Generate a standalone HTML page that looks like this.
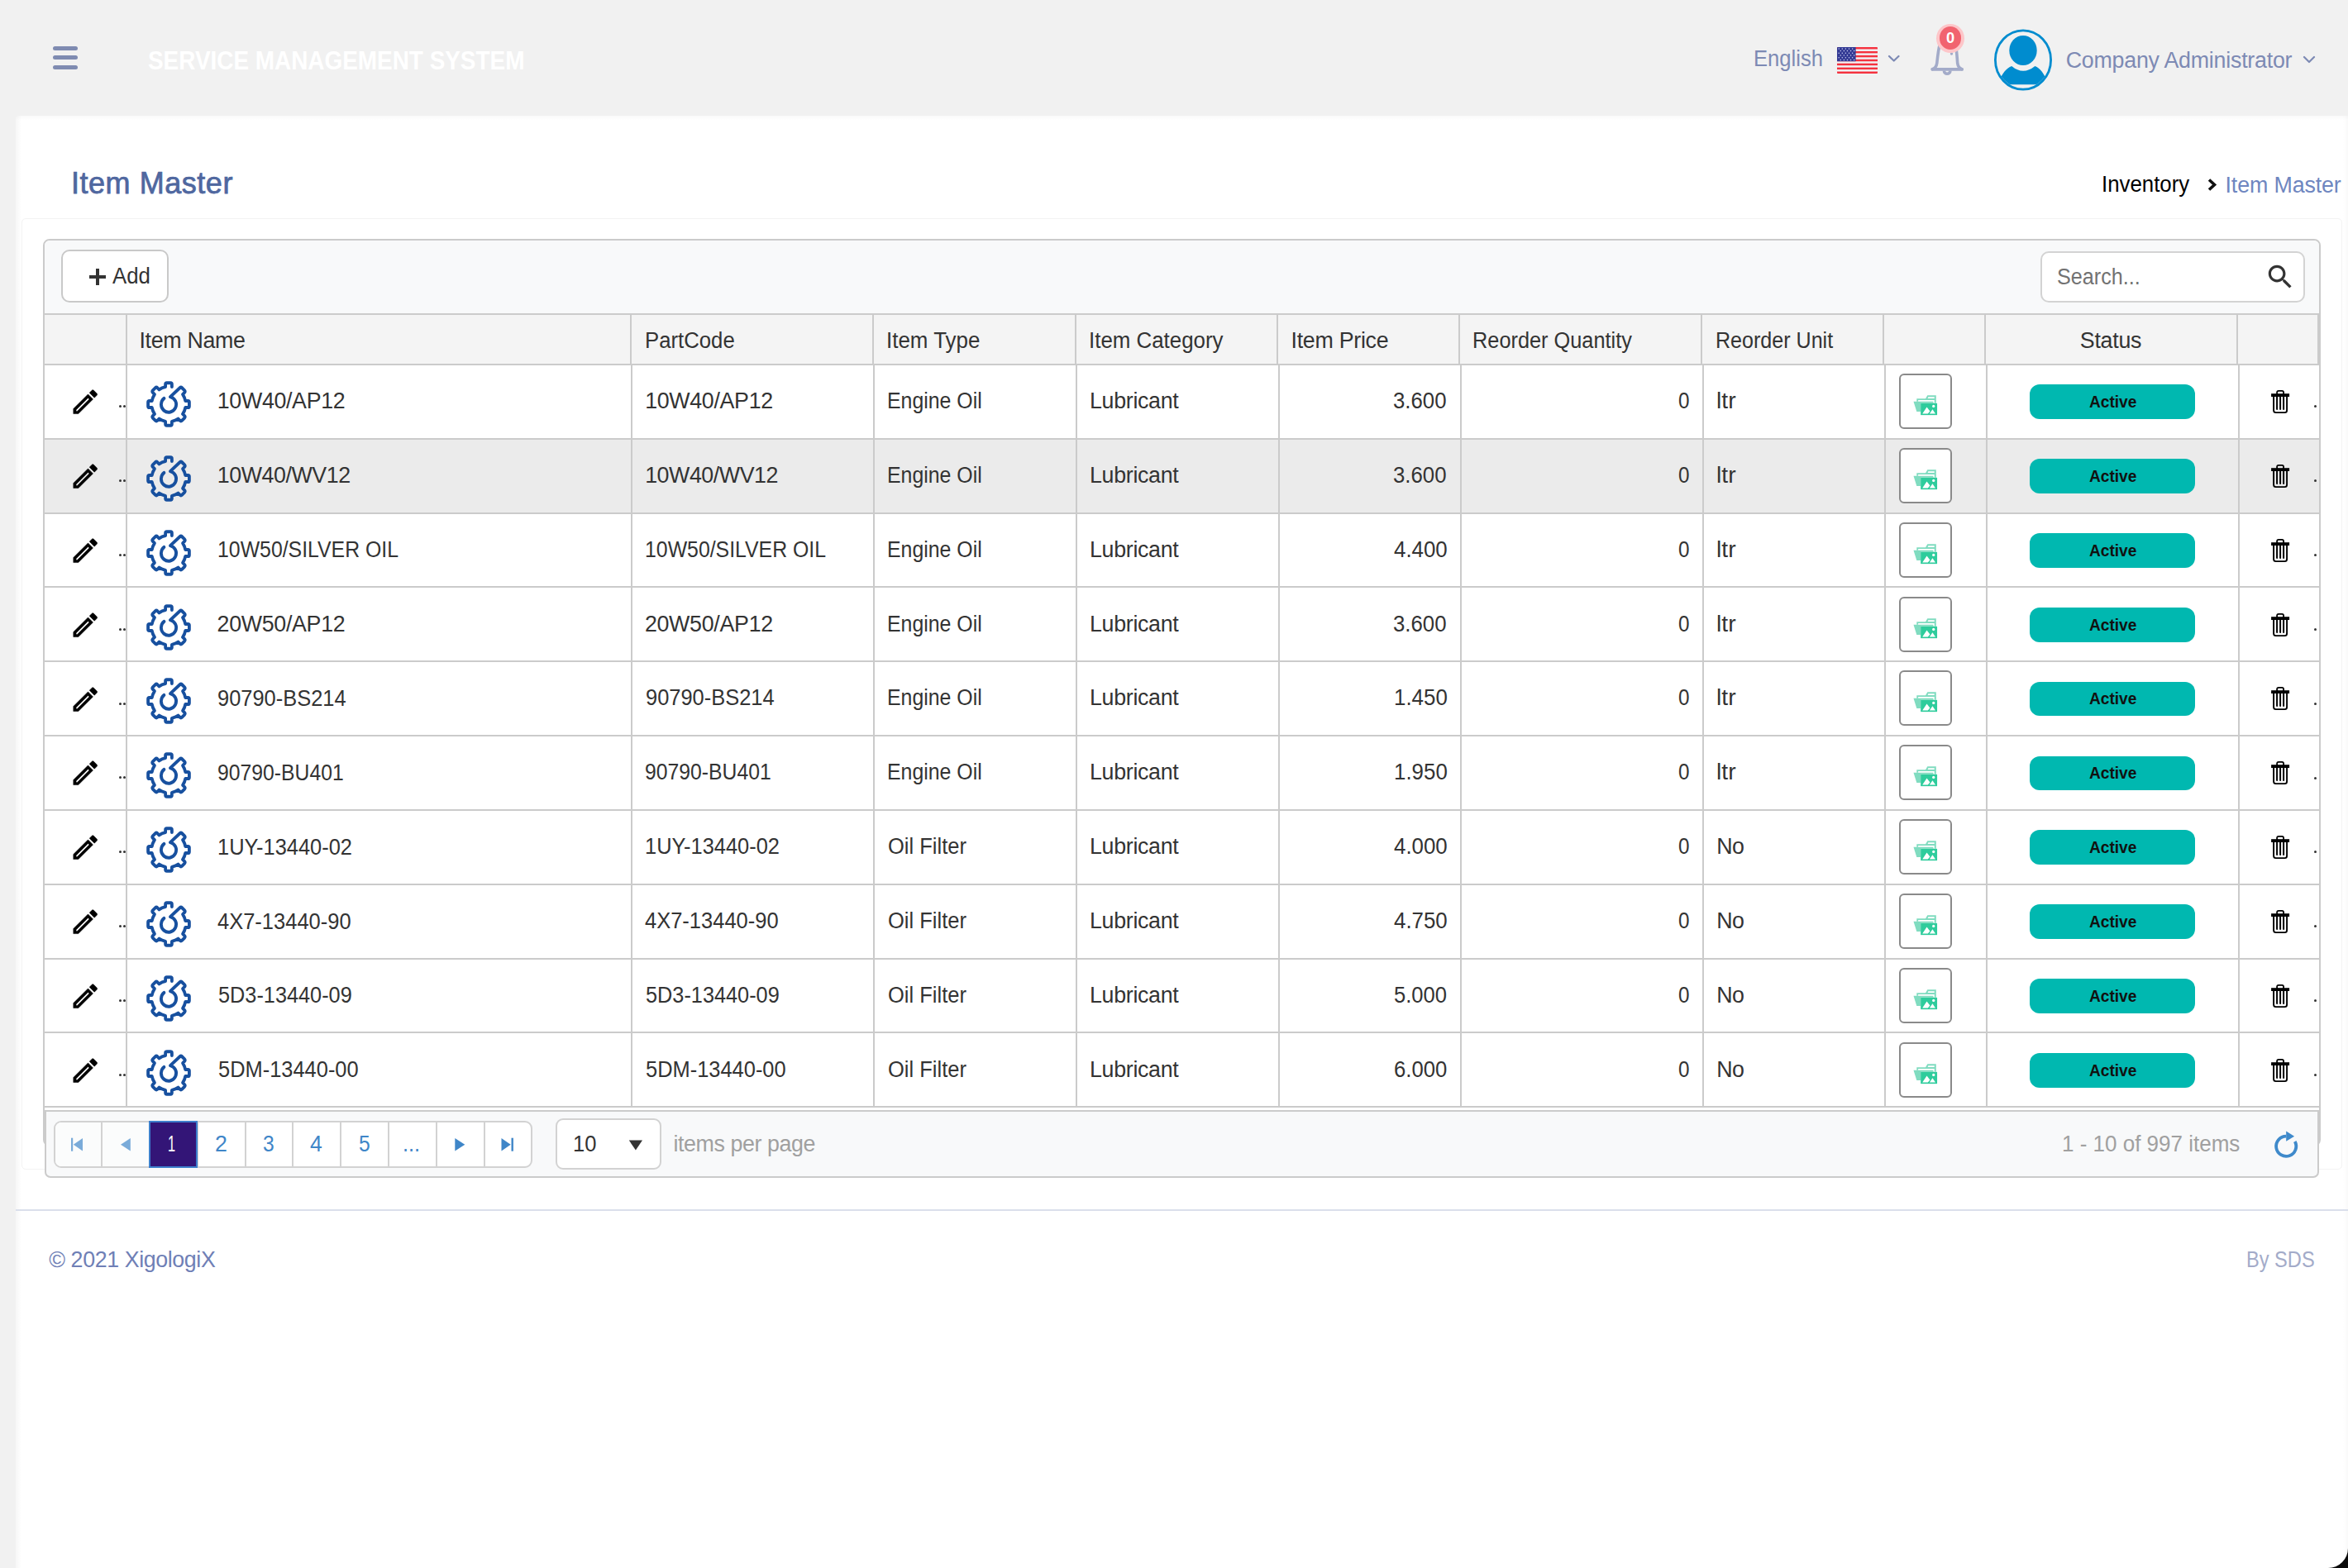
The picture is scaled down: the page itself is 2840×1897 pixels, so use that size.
<!DOCTYPE html>
<html><head><meta charset="utf-8"><title>Item Master</title>
<style>
html,body{margin:0;padding:0;}
body{width:2840px;height:1897px;position:relative;overflow:hidden;background:#f1f1f1;font-family:"Liberation Sans",sans-serif;}
.t{position:absolute;white-space:pre;line-height:1;}
</style></head><body>
<div style="position:absolute;left:0;top:0;width:2840px;height:1897px;background:#f1f1f1"></div>
<div style="position:absolute;left:64.00px;top:56.00px;width:30.20px;height:5.20px;background:#7f8bb1;border-radius:3px"></div>
<div style="position:absolute;left:64.00px;top:67.30px;width:30.20px;height:5.20px;background:#7f8bb1;border-radius:3px"></div>
<div style="position:absolute;left:64.00px;top:78.70px;width:30.20px;height:5.20px;background:#7f8bb1;border-radius:3px"></div>
<svg style="position:absolute;left:2222px;top:57px" width="49" height="32" viewBox="0 0 49 32"><defs><clipPath id="fc"><rect x="0" y="0" width="49" height="32" rx="1"/></clipPath></defs><g clip-path="url(#fc)"><rect width="49" height="32" fill="#f0f3f5"/><rect x="0" y="0.000" width="49" height="2.462" fill="#f5323f"/><rect x="0" y="4.923" width="49" height="2.462" fill="#f5323f"/><rect x="0" y="9.846" width="49" height="2.462" fill="#f5323f"/><rect x="0" y="14.769" width="49" height="2.462" fill="#f5323f"/><rect x="0" y="19.692" width="49" height="2.462" fill="#f5323f"/><rect x="0" y="24.615" width="49" height="2.462" fill="#f5323f"/><rect x="0" y="29.538" width="49" height="2.462" fill="#f5323f"/><rect x="0" y="0" width="22.6" height="17.2" fill="#333a94"/><circle cx="2.20" cy="1.90" r="0.75" fill="#c9cdf0"/><circle cx="6.30" cy="1.90" r="0.75" fill="#c9cdf0"/><circle cx="10.40" cy="1.90" r="0.75" fill="#c9cdf0"/><circle cx="14.50" cy="1.90" r="0.75" fill="#c9cdf0"/><circle cx="18.60" cy="1.90" r="0.75" fill="#c9cdf0"/><circle cx="4.25" cy="4.60" r="0.75" fill="#c9cdf0"/><circle cx="8.35" cy="4.60" r="0.75" fill="#c9cdf0"/><circle cx="12.45" cy="4.60" r="0.75" fill="#c9cdf0"/><circle cx="16.55" cy="4.60" r="0.75" fill="#c9cdf0"/><circle cx="20.65" cy="4.60" r="0.75" fill="#c9cdf0"/><circle cx="2.20" cy="7.30" r="0.75" fill="#c9cdf0"/><circle cx="6.30" cy="7.30" r="0.75" fill="#c9cdf0"/><circle cx="10.40" cy="7.30" r="0.75" fill="#c9cdf0"/><circle cx="14.50" cy="7.30" r="0.75" fill="#c9cdf0"/><circle cx="18.60" cy="7.30" r="0.75" fill="#c9cdf0"/><circle cx="4.25" cy="10.00" r="0.75" fill="#c9cdf0"/><circle cx="8.35" cy="10.00" r="0.75" fill="#c9cdf0"/><circle cx="12.45" cy="10.00" r="0.75" fill="#c9cdf0"/><circle cx="16.55" cy="10.00" r="0.75" fill="#c9cdf0"/><circle cx="20.65" cy="10.00" r="0.75" fill="#c9cdf0"/><circle cx="2.20" cy="12.70" r="0.75" fill="#c9cdf0"/><circle cx="6.30" cy="12.70" r="0.75" fill="#c9cdf0"/><circle cx="10.40" cy="12.70" r="0.75" fill="#c9cdf0"/><circle cx="14.50" cy="12.70" r="0.75" fill="#c9cdf0"/><circle cx="18.60" cy="12.70" r="0.75" fill="#c9cdf0"/><circle cx="4.25" cy="15.40" r="0.75" fill="#c9cdf0"/><circle cx="8.35" cy="15.40" r="0.75" fill="#c9cdf0"/><circle cx="12.45" cy="15.40" r="0.75" fill="#c9cdf0"/><circle cx="16.55" cy="15.40" r="0.75" fill="#c9cdf0"/><circle cx="20.65" cy="15.40" r="0.75" fill="#c9cdf0"/></g></svg>
<svg style="position:absolute;left:2282.50px;top:65.50px" width="15.50" height="10.50"><polyline points="2,2 7.75,7.50 13.50,2" fill="none" stroke="#7d8ab4" stroke-width="2.2" stroke-linecap="round" stroke-linejoin="round"/></svg>
<svg style="position:absolute;left:2784.50px;top:67.00px" width="16.00" height="11.00"><polyline points="2,2 8.00,8.00 14.00,2" fill="none" stroke="#7d8ab4" stroke-width="2.2" stroke-linecap="round" stroke-linejoin="round"/></svg>
<svg style="position:absolute;left:2325px;top:20px" width="60" height="80" viewBox="2325 20 60 80"><path d="M2346.2 54 C2344.3 61 2343.4 71 2342.8 76.2 C2342.3 80.2 2340.6 82.6 2337.2 83.7" fill="none" stroke="#a3abc9" stroke-width="3.6" stroke-linecap="round"/><path d="M2365.8 57 C2367 64 2367.3 72 2367.7 76.6 C2368.2 80.4 2369.8 82.7 2373 83.7" fill="none" stroke="#a3abc9" stroke-width="3.6" stroke-linecap="round"/><line x1="2337.4" y1="83.9" x2="2373.1" y2="83.9" stroke="#a3abc9" stroke-width="3.7" stroke-linecap="round"/><path d="M2351.4 85.5 A3.75 3.75 0 0 0 2358.9 85.5" fill="none" stroke="#a3abc9" stroke-width="3.6"/><circle cx="2360.5" cy="65" r="1.7" fill="#a3abc9"/></svg>
<div style="position:absolute;left:2341.9px;top:28.7px;width:34.2px;height:35px;border-radius:50%;background:#fdc6c9"></div>
<div style="position:absolute;left:2345.8px;top:32.3px;width:26.4px;height:27.6px;border-radius:50%;background:#f1636f"></div>
<svg style="position:absolute;left:2405px;top:30px" width="85" height="85" viewBox="2405 30 85 85"><defs><clipPath id="avc"><ellipse cx="2447" cy="72.5" rx="32.2" ry="34.3"/></clipPath></defs><ellipse cx="2447" cy="72.5" rx="33.6" ry="35.7" fill="none" stroke="#008ccf" stroke-width="2.8"/><ellipse cx="2447" cy="61" rx="16.7" ry="18" fill="#008ccf"/><path clip-path="url(#avc)" d="M2418 98 C2422 88 2427 82.5 2433.2 79.9 Q2447 91.5 2461.4 79.9 C2467.5 82.5 2472 88 2476 98 L2478 102.2 L2416 102.2 Z" fill="#008ccf"/></svg>
<div style="position:absolute;left:19px;top:140px;width:2821px;height:1757px;background:#fff"></div>
<div style="position:absolute;left:2834px;top:140px;width:6px;height:1757px;background:linear-gradient(90deg,rgba(0,0,0,0),rgba(0,0,0,0.025))"></div>
<div style="position:absolute;left:19px;top:140px;width:7px;height:1757px;background:linear-gradient(90deg,rgba(0,0,0,0.035),rgba(0,0,0,0))"></div>
<div style="position:absolute;left:19px;top:140px;width:2821px;height:5px;background:linear-gradient(180deg,rgba(0,0,0,0.025),rgba(0,0,0,0))"></div>
<svg style="position:absolute;left:2666px;top:212px" width="20" height="24"><polyline points="6,5.5 12.5,11.5 6,17.5" fill="none" stroke="#111" stroke-width="3.6" stroke-linecap="butt" stroke-linejoin="miter"/></svg>
<div style="position:absolute;left:25.5px;top:263.5px;width:2807px;height:1151.5px;border:1px solid #f3f3f3;border-radius:5px;box-sizing:border-box"></div>
<div style="position:absolute;left:51.9px;top:289.2px;width:2755.30px;height:1097.60px;border:2px solid #cbcbcb;border-radius:8px;box-sizing:border-box;background:#fff;overflow:hidden"><div style="position:absolute;left:0;top:0;right:0;height:87.70px;background:#f8f9fa"></div></div>
<div style="position:absolute;left:74.4px;top:302px;width:129.6px;height:64.4px;border:2px solid #c9c9c9;border-radius:10px;box-sizing:border-box;background:#fff"></div>
<div style="position:absolute;left:108.00px;top:333.30px;width:20.30px;height:3.70px;background:#333"></div>
<div style="position:absolute;left:116.30px;top:325.00px;width:3.70px;height:20.20px;background:#333"></div>
<div style="position:absolute;left:2467.7px;top:303.8px;width:320.6px;height:62.5px;border:2px solid #d3d3d3;border-radius:10px;box-sizing:border-box;background:#fff"></div>
<svg style="position:absolute;left:2738.8px;top:316.2px" width="38.2" height="38.2" viewBox="0 0 24 24"><path fill="#333" d="M15.5 14h-.79l-.28-.27C15.41 12.59 16 11.11 16 9.5 16 5.91 13.09 3 9.5 3S3 5.91 3 9.5 5.91 16 9.5 16c1.61 0 3.09-.59 4.23-1.57l.27.28v.79l5 4.99L20.49 19l-4.99-5zm-6 0C7.01 14 5 11.99 5 9.5S7.01 5 9.5 5 14 7.01 14 9.5 11.99 14 9.5 14z"/></svg>
<div style="position:absolute;left:53.90px;top:379.90px;width:2751.30px;height:61.00px;background:#f4f4f4"></div>
<div style="position:absolute;left:53.90px;top:530.74px;width:2751.30px;height:89.84px;background:#ebebeb"></div>
<div style="position:absolute;left:52.90px;top:378.90px;width:2753.30px;height:2.00px;background:#cbcbcb"></div>
<div style="position:absolute;left:52.90px;top:439.90px;width:2753.30px;height:2.00px;background:#cbcbcb"></div>
<div style="position:absolute;left:52.90px;top:529.74px;width:2753.30px;height:2.00px;background:#cbcbcb"></div>
<div style="position:absolute;left:52.90px;top:619.58px;width:2753.30px;height:2.00px;background:#cbcbcb"></div>
<div style="position:absolute;left:52.90px;top:709.42px;width:2753.30px;height:2.00px;background:#cbcbcb"></div>
<div style="position:absolute;left:52.90px;top:799.26px;width:2753.30px;height:2.00px;background:#cbcbcb"></div>
<div style="position:absolute;left:52.90px;top:889.10px;width:2753.30px;height:2.00px;background:#cbcbcb"></div>
<div style="position:absolute;left:52.90px;top:978.94px;width:2753.30px;height:2.00px;background:#cbcbcb"></div>
<div style="position:absolute;left:52.90px;top:1068.78px;width:2753.30px;height:2.00px;background:#cbcbcb"></div>
<div style="position:absolute;left:52.90px;top:1158.62px;width:2753.30px;height:2.00px;background:#cbcbcb"></div>
<div style="position:absolute;left:52.90px;top:1248.46px;width:2753.30px;height:2.00px;background:#cbcbcb"></div>
<div style="position:absolute;left:52.90px;top:1338.30px;width:2753.30px;height:2.00px;background:#cbcbcb"></div>
<div style="position:absolute;left:151.82px;top:379.90px;width:2.00px;height:61.00px;background:#cbcbcb"></div>
<div style="position:absolute;left:151.90px;top:440.90px;width:2.00px;height:898.40px;background:#cbcbcb"></div>
<div style="position:absolute;left:762.43px;top:379.90px;width:2.00px;height:61.00px;background:#cbcbcb"></div>
<div style="position:absolute;left:763.00px;top:440.90px;width:2.00px;height:898.40px;background:#cbcbcb"></div>
<div style="position:absolute;left:1055.40px;top:379.90px;width:2.00px;height:61.00px;background:#cbcbcb"></div>
<div style="position:absolute;left:1056.20px;top:440.90px;width:2.00px;height:898.40px;background:#cbcbcb"></div>
<div style="position:absolute;left:1300.40px;top:379.90px;width:2.00px;height:61.00px;background:#cbcbcb"></div>
<div style="position:absolute;left:1301.40px;top:440.90px;width:2.00px;height:898.40px;background:#cbcbcb"></div>
<div style="position:absolute;left:1544.41px;top:379.90px;width:2.00px;height:61.00px;background:#cbcbcb"></div>
<div style="position:absolute;left:1545.60px;top:440.90px;width:2.00px;height:898.40px;background:#cbcbcb"></div>
<div style="position:absolute;left:1764.33px;top:379.90px;width:2.00px;height:61.00px;background:#cbcbcb"></div>
<div style="position:absolute;left:1765.70px;top:440.90px;width:2.00px;height:898.40px;background:#cbcbcb"></div>
<div style="position:absolute;left:2057.19px;top:379.90px;width:2.00px;height:61.00px;background:#cbcbcb"></div>
<div style="position:absolute;left:2058.80px;top:440.90px;width:2.00px;height:898.40px;background:#cbcbcb"></div>
<div style="position:absolute;left:2277.12px;top:379.90px;width:2.00px;height:61.00px;background:#cbcbcb"></div>
<div style="position:absolute;left:2278.90px;top:440.90px;width:2.00px;height:898.40px;background:#cbcbcb"></div>
<div style="position:absolute;left:2400.02px;top:379.90px;width:2.00px;height:61.00px;background:#cbcbcb"></div>
<div style="position:absolute;left:2401.90px;top:440.90px;width:2.00px;height:898.40px;background:#cbcbcb"></div>
<div style="position:absolute;left:2704.98px;top:379.90px;width:2.00px;height:61.00px;background:#cbcbcb"></div>
<div style="position:absolute;left:2707.10px;top:440.90px;width:2.00px;height:898.40px;background:#cbcbcb"></div>
<div style="position:absolute;left:2802.60px;top:379.90px;width:2.00px;height:61.00px;background:#cbcbcb"></div>
<svg style="position:absolute;left:84.4px;top:467.22px" width="38.4" height="38.4" viewBox="0 0 24 24"><path fill="#000" stroke="#000" stroke-width="0.32" stroke-linejoin="miter" d="M3 17.25V21h3.75L17.81 9.94l-3.75-3.75L3 17.25zM5.92 19H5v-.92l9.06-9.06.92.92L5.92 19zM20.71 5.63l-2.34-2.34c-.39-.39-1.02-.39-1.41 0l-1.83 1.83 3.75 3.75 1.83-1.83c.39-.39.39-1.02 0-1.41z"/></svg>
<div style="position:absolute;left:143.50px;top:490.22px;width:3px;height:3px;border-radius:50%;background:#333"></div>
<div style="position:absolute;left:149.00px;top:490.22px;width:3px;height:3px;border-radius:50%;background:#333"></div>
<svg style="position:absolute;left:173.80px;top:459.07px" width="60" height="60" viewBox="-30 -30 60 60"><path d="M3.90 -20.20 L3.90 -23.30 Q3.90 -24.90 2.30 -24.90 L-2.30 -24.90 Q-3.90 -24.90 -3.90 -23.30 L-3.90 -20.20 A20.50 20.50 0 0 0 -11.53 -17.04 L-13.72 -19.23 Q-14.85 -20.36 -15.98 -19.23 L-19.23 -15.98 Q-20.36 -14.85 -19.23 -13.72 L-17.04 -11.53 A20.50 20.50 0 0 0 -20.20 -3.90 L-23.30 -3.90 Q-24.90 -3.90 -24.90 -2.30 L-24.90 2.30 Q-24.90 3.90 -23.30 3.90 L-20.20 3.90 A20.50 20.50 0 0 0 -17.04 11.53 L-19.23 13.72 Q-20.36 14.85 -19.23 15.98 L-15.98 19.23 Q-14.85 20.36 -13.72 19.23 L-11.53 17.04 A20.50 20.50 0 0 0 -3.90 20.20 L-3.90 23.30 Q-3.90 24.90 -2.30 24.90 L2.30 24.90 Q3.90 24.90 3.90 23.30 L3.90 20.20 A20.50 20.50 0 0 0 11.53 17.04 L13.72 19.23 Q14.85 20.36 15.98 19.23 L19.23 15.98 Q20.36 14.85 19.23 13.72 L17.04 11.53 A20.50 20.50 0 0 0 20.20 3.90 L23.30 3.90 Q24.90 3.90 24.90 2.30 L24.90 -2.30 Q24.90 -3.90 23.30 -3.90 L20.20 -3.90 A20.50 20.50 0 0 0 17.04 -11.53 L19.23 -13.72 Q20.36 -14.85 19.23 -15.98 L16.12 -19.09 Q14.85 -20.36 13.52 -19.15 L1.97 -8.58 A9.1 9.1 0 1 1 -5.55 -6.91" transform="scale(1,1.035)" fill="none" stroke="#17509f" stroke-width="3.8" stroke-linejoin="round" stroke-linecap="round"/></svg>
<div style="position:absolute;left:2297.4px;top:452.12px;width:63.6px;height:66.9px;border:2px solid #8a8a8a;border-radius:6px;box-sizing:border-box;background:#fff"></div>
<svg style="position:absolute;left:2290px;top:445.02px" width="80" height="80" viewBox="0 0 1568 1568"><path fill-rule="evenodd" d="M555 800 L555 730 L765 730 L810 650 L1015 650 L1015 840 L975 840 L975 765 L590 765 L590 800 Z M830 690 L975 690 L975 725 L815 725 Z" fill="#80dcc0"/><path d="M480 800 L940 800 L960 840 L650 840 L650 1040 L555 1040 Z" fill="#80dcc0"/><path d="M650 840 L1040 840 L1040 1120 L650 1120 Z" fill="#2ecc9c"/><path d="M690 1090 L795 930 L870 1030 L820 1090 Z M860 1090 L930 985 L1000 1090 Z" fill="#fff"/><circle cx="955" cy="910" r="32" fill="#fff"/></svg>
<div style="position:absolute;left:2455px;top:465.42px;width:200px;height:41.6px;border-radius:12px;background:#00b8b0"></div>
<svg style="position:absolute;left:2740px;top:465.02px" width="36" height="40" viewBox="2740 465 36 40"><rect x="2754.1" y="472.9" width="8" height="5" rx="2" fill="none" stroke="#000" stroke-width="1.8"/><rect x="2747.1" y="476.2" width="22" height="3.8" fill="#000"/><path d="M2750.1 479.5 L2750.1 496.5 Q2750.1 499.1 2752.7 499.1 L2763.5 499.1 Q2766.1 499.1 2766.1 496.5 L2766.1 479.5" fill="none" stroke="#000" stroke-width="1.9"/><line x1="2754.1" y1="480" x2="2754.1" y2="495" stroke="#000" stroke-width="2" stroke-linecap="round"/><line x1="2758.1" y1="480" x2="2758.1" y2="495" stroke="#000" stroke-width="2" stroke-linecap="round"/><line x1="2762.1" y1="480" x2="2762.1" y2="495" stroke="#000" stroke-width="2" stroke-linecap="round"/></svg>
<div style="position:absolute;left:2799.20px;top:490.42px;width:3px;height:3px;border-radius:50%;background:#333"></div>
<svg style="position:absolute;left:84.4px;top:557.06px" width="38.4" height="38.4" viewBox="0 0 24 24"><path fill="#000" stroke="#000" stroke-width="0.32" stroke-linejoin="miter" d="M3 17.25V21h3.75L17.81 9.94l-3.75-3.75L3 17.25zM5.92 19H5v-.92l9.06-9.06.92.92L5.92 19zM20.71 5.63l-2.34-2.34c-.39-.39-1.02-.39-1.41 0l-1.83 1.83 3.75 3.75 1.83-1.83c.39-.39.39-1.02 0-1.41z"/></svg>
<div style="position:absolute;left:143.50px;top:580.06px;width:3px;height:3px;border-radius:50%;background:#333"></div>
<div style="position:absolute;left:149.00px;top:580.06px;width:3px;height:3px;border-radius:50%;background:#333"></div>
<svg style="position:absolute;left:173.80px;top:548.91px" width="60" height="60" viewBox="-30 -30 60 60"><path d="M3.90 -20.20 L3.90 -23.30 Q3.90 -24.90 2.30 -24.90 L-2.30 -24.90 Q-3.90 -24.90 -3.90 -23.30 L-3.90 -20.20 A20.50 20.50 0 0 0 -11.53 -17.04 L-13.72 -19.23 Q-14.85 -20.36 -15.98 -19.23 L-19.23 -15.98 Q-20.36 -14.85 -19.23 -13.72 L-17.04 -11.53 A20.50 20.50 0 0 0 -20.20 -3.90 L-23.30 -3.90 Q-24.90 -3.90 -24.90 -2.30 L-24.90 2.30 Q-24.90 3.90 -23.30 3.90 L-20.20 3.90 A20.50 20.50 0 0 0 -17.04 11.53 L-19.23 13.72 Q-20.36 14.85 -19.23 15.98 L-15.98 19.23 Q-14.85 20.36 -13.72 19.23 L-11.53 17.04 A20.50 20.50 0 0 0 -3.90 20.20 L-3.90 23.30 Q-3.90 24.90 -2.30 24.90 L2.30 24.90 Q3.90 24.90 3.90 23.30 L3.90 20.20 A20.50 20.50 0 0 0 11.53 17.04 L13.72 19.23 Q14.85 20.36 15.98 19.23 L19.23 15.98 Q20.36 14.85 19.23 13.72 L17.04 11.53 A20.50 20.50 0 0 0 20.20 3.90 L23.30 3.90 Q24.90 3.90 24.90 2.30 L24.90 -2.30 Q24.90 -3.90 23.30 -3.90 L20.20 -3.90 A20.50 20.50 0 0 0 17.04 -11.53 L19.23 -13.72 Q20.36 -14.85 19.23 -15.98 L16.12 -19.09 Q14.85 -20.36 13.52 -19.15 L1.97 -8.58 A9.1 9.1 0 1 1 -5.55 -6.91" transform="scale(1,1.035)" fill="none" stroke="#17509f" stroke-width="3.8" stroke-linejoin="round" stroke-linecap="round"/></svg>
<div style="position:absolute;left:2297.4px;top:541.96px;width:63.6px;height:66.9px;border:2px solid #8a8a8a;border-radius:6px;box-sizing:border-box;background:#fff"></div>
<svg style="position:absolute;left:2290px;top:534.86px" width="80" height="80" viewBox="0 0 1568 1568"><path fill-rule="evenodd" d="M555 800 L555 730 L765 730 L810 650 L1015 650 L1015 840 L975 840 L975 765 L590 765 L590 800 Z M830 690 L975 690 L975 725 L815 725 Z" fill="#80dcc0"/><path d="M480 800 L940 800 L960 840 L650 840 L650 1040 L555 1040 Z" fill="#80dcc0"/><path d="M650 840 L1040 840 L1040 1120 L650 1120 Z" fill="#2ecc9c"/><path d="M690 1090 L795 930 L870 1030 L820 1090 Z M860 1090 L930 985 L1000 1090 Z" fill="#fff"/><circle cx="955" cy="910" r="32" fill="#fff"/></svg>
<div style="position:absolute;left:2455px;top:555.26px;width:200px;height:41.6px;border-radius:12px;background:#00b8b0"></div>
<svg style="position:absolute;left:2740px;top:554.86px" width="36" height="40" viewBox="2740 465 36 40"><rect x="2754.1" y="472.9" width="8" height="5" rx="2" fill="none" stroke="#000" stroke-width="1.8"/><rect x="2747.1" y="476.2" width="22" height="3.8" fill="#000"/><path d="M2750.1 479.5 L2750.1 496.5 Q2750.1 499.1 2752.7 499.1 L2763.5 499.1 Q2766.1 499.1 2766.1 496.5 L2766.1 479.5" fill="none" stroke="#000" stroke-width="1.9"/><line x1="2754.1" y1="480" x2="2754.1" y2="495" stroke="#000" stroke-width="2" stroke-linecap="round"/><line x1="2758.1" y1="480" x2="2758.1" y2="495" stroke="#000" stroke-width="2" stroke-linecap="round"/><line x1="2762.1" y1="480" x2="2762.1" y2="495" stroke="#000" stroke-width="2" stroke-linecap="round"/></svg>
<div style="position:absolute;left:2799.20px;top:580.26px;width:3px;height:3px;border-radius:50%;background:#333"></div>
<svg style="position:absolute;left:84.4px;top:646.90px" width="38.4" height="38.4" viewBox="0 0 24 24"><path fill="#000" stroke="#000" stroke-width="0.32" stroke-linejoin="miter" d="M3 17.25V21h3.75L17.81 9.94l-3.75-3.75L3 17.25zM5.92 19H5v-.92l9.06-9.06.92.92L5.92 19zM20.71 5.63l-2.34-2.34c-.39-.39-1.02-.39-1.41 0l-1.83 1.83 3.75 3.75 1.83-1.83c.39-.39.39-1.02 0-1.41z"/></svg>
<div style="position:absolute;left:143.50px;top:669.90px;width:3px;height:3px;border-radius:50%;background:#333"></div>
<div style="position:absolute;left:149.00px;top:669.90px;width:3px;height:3px;border-radius:50%;background:#333"></div>
<svg style="position:absolute;left:173.80px;top:638.75px" width="60" height="60" viewBox="-30 -30 60 60"><path d="M3.90 -20.20 L3.90 -23.30 Q3.90 -24.90 2.30 -24.90 L-2.30 -24.90 Q-3.90 -24.90 -3.90 -23.30 L-3.90 -20.20 A20.50 20.50 0 0 0 -11.53 -17.04 L-13.72 -19.23 Q-14.85 -20.36 -15.98 -19.23 L-19.23 -15.98 Q-20.36 -14.85 -19.23 -13.72 L-17.04 -11.53 A20.50 20.50 0 0 0 -20.20 -3.90 L-23.30 -3.90 Q-24.90 -3.90 -24.90 -2.30 L-24.90 2.30 Q-24.90 3.90 -23.30 3.90 L-20.20 3.90 A20.50 20.50 0 0 0 -17.04 11.53 L-19.23 13.72 Q-20.36 14.85 -19.23 15.98 L-15.98 19.23 Q-14.85 20.36 -13.72 19.23 L-11.53 17.04 A20.50 20.50 0 0 0 -3.90 20.20 L-3.90 23.30 Q-3.90 24.90 -2.30 24.90 L2.30 24.90 Q3.90 24.90 3.90 23.30 L3.90 20.20 A20.50 20.50 0 0 0 11.53 17.04 L13.72 19.23 Q14.85 20.36 15.98 19.23 L19.23 15.98 Q20.36 14.85 19.23 13.72 L17.04 11.53 A20.50 20.50 0 0 0 20.20 3.90 L23.30 3.90 Q24.90 3.90 24.90 2.30 L24.90 -2.30 Q24.90 -3.90 23.30 -3.90 L20.20 -3.90 A20.50 20.50 0 0 0 17.04 -11.53 L19.23 -13.72 Q20.36 -14.85 19.23 -15.98 L16.12 -19.09 Q14.85 -20.36 13.52 -19.15 L1.97 -8.58 A9.1 9.1 0 1 1 -5.55 -6.91" transform="scale(1,1.035)" fill="none" stroke="#17509f" stroke-width="3.8" stroke-linejoin="round" stroke-linecap="round"/></svg>
<div style="position:absolute;left:2297.4px;top:631.80px;width:63.6px;height:66.9px;border:2px solid #8a8a8a;border-radius:6px;box-sizing:border-box;background:#fff"></div>
<svg style="position:absolute;left:2290px;top:624.70px" width="80" height="80" viewBox="0 0 1568 1568"><path fill-rule="evenodd" d="M555 800 L555 730 L765 730 L810 650 L1015 650 L1015 840 L975 840 L975 765 L590 765 L590 800 Z M830 690 L975 690 L975 725 L815 725 Z" fill="#80dcc0"/><path d="M480 800 L940 800 L960 840 L650 840 L650 1040 L555 1040 Z" fill="#80dcc0"/><path d="M650 840 L1040 840 L1040 1120 L650 1120 Z" fill="#2ecc9c"/><path d="M690 1090 L795 930 L870 1030 L820 1090 Z M860 1090 L930 985 L1000 1090 Z" fill="#fff"/><circle cx="955" cy="910" r="32" fill="#fff"/></svg>
<div style="position:absolute;left:2455px;top:645.10px;width:200px;height:41.6px;border-radius:12px;background:#00b8b0"></div>
<svg style="position:absolute;left:2740px;top:644.70px" width="36" height="40" viewBox="2740 465 36 40"><rect x="2754.1" y="472.9" width="8" height="5" rx="2" fill="none" stroke="#000" stroke-width="1.8"/><rect x="2747.1" y="476.2" width="22" height="3.8" fill="#000"/><path d="M2750.1 479.5 L2750.1 496.5 Q2750.1 499.1 2752.7 499.1 L2763.5 499.1 Q2766.1 499.1 2766.1 496.5 L2766.1 479.5" fill="none" stroke="#000" stroke-width="1.9"/><line x1="2754.1" y1="480" x2="2754.1" y2="495" stroke="#000" stroke-width="2" stroke-linecap="round"/><line x1="2758.1" y1="480" x2="2758.1" y2="495" stroke="#000" stroke-width="2" stroke-linecap="round"/><line x1="2762.1" y1="480" x2="2762.1" y2="495" stroke="#000" stroke-width="2" stroke-linecap="round"/></svg>
<div style="position:absolute;left:2799.20px;top:670.10px;width:3px;height:3px;border-radius:50%;background:#333"></div>
<svg style="position:absolute;left:84.4px;top:736.74px" width="38.4" height="38.4" viewBox="0 0 24 24"><path fill="#000" stroke="#000" stroke-width="0.32" stroke-linejoin="miter" d="M3 17.25V21h3.75L17.81 9.94l-3.75-3.75L3 17.25zM5.92 19H5v-.92l9.06-9.06.92.92L5.92 19zM20.71 5.63l-2.34-2.34c-.39-.39-1.02-.39-1.41 0l-1.83 1.83 3.75 3.75 1.83-1.83c.39-.39.39-1.02 0-1.41z"/></svg>
<div style="position:absolute;left:143.50px;top:759.74px;width:3px;height:3px;border-radius:50%;background:#333"></div>
<div style="position:absolute;left:149.00px;top:759.74px;width:3px;height:3px;border-radius:50%;background:#333"></div>
<svg style="position:absolute;left:173.80px;top:728.59px" width="60" height="60" viewBox="-30 -30 60 60"><path d="M3.90 -20.20 L3.90 -23.30 Q3.90 -24.90 2.30 -24.90 L-2.30 -24.90 Q-3.90 -24.90 -3.90 -23.30 L-3.90 -20.20 A20.50 20.50 0 0 0 -11.53 -17.04 L-13.72 -19.23 Q-14.85 -20.36 -15.98 -19.23 L-19.23 -15.98 Q-20.36 -14.85 -19.23 -13.72 L-17.04 -11.53 A20.50 20.50 0 0 0 -20.20 -3.90 L-23.30 -3.90 Q-24.90 -3.90 -24.90 -2.30 L-24.90 2.30 Q-24.90 3.90 -23.30 3.90 L-20.20 3.90 A20.50 20.50 0 0 0 -17.04 11.53 L-19.23 13.72 Q-20.36 14.85 -19.23 15.98 L-15.98 19.23 Q-14.85 20.36 -13.72 19.23 L-11.53 17.04 A20.50 20.50 0 0 0 -3.90 20.20 L-3.90 23.30 Q-3.90 24.90 -2.30 24.90 L2.30 24.90 Q3.90 24.90 3.90 23.30 L3.90 20.20 A20.50 20.50 0 0 0 11.53 17.04 L13.72 19.23 Q14.85 20.36 15.98 19.23 L19.23 15.98 Q20.36 14.85 19.23 13.72 L17.04 11.53 A20.50 20.50 0 0 0 20.20 3.90 L23.30 3.90 Q24.90 3.90 24.90 2.30 L24.90 -2.30 Q24.90 -3.90 23.30 -3.90 L20.20 -3.90 A20.50 20.50 0 0 0 17.04 -11.53 L19.23 -13.72 Q20.36 -14.85 19.23 -15.98 L16.12 -19.09 Q14.85 -20.36 13.52 -19.15 L1.97 -8.58 A9.1 9.1 0 1 1 -5.55 -6.91" transform="scale(1,1.035)" fill="none" stroke="#17509f" stroke-width="3.8" stroke-linejoin="round" stroke-linecap="round"/></svg>
<div style="position:absolute;left:2297.4px;top:721.64px;width:63.6px;height:66.9px;border:2px solid #8a8a8a;border-radius:6px;box-sizing:border-box;background:#fff"></div>
<svg style="position:absolute;left:2290px;top:714.54px" width="80" height="80" viewBox="0 0 1568 1568"><path fill-rule="evenodd" d="M555 800 L555 730 L765 730 L810 650 L1015 650 L1015 840 L975 840 L975 765 L590 765 L590 800 Z M830 690 L975 690 L975 725 L815 725 Z" fill="#80dcc0"/><path d="M480 800 L940 800 L960 840 L650 840 L650 1040 L555 1040 Z" fill="#80dcc0"/><path d="M650 840 L1040 840 L1040 1120 L650 1120 Z" fill="#2ecc9c"/><path d="M690 1090 L795 930 L870 1030 L820 1090 Z M860 1090 L930 985 L1000 1090 Z" fill="#fff"/><circle cx="955" cy="910" r="32" fill="#fff"/></svg>
<div style="position:absolute;left:2455px;top:734.94px;width:200px;height:41.6px;border-radius:12px;background:#00b8b0"></div>
<svg style="position:absolute;left:2740px;top:734.54px" width="36" height="40" viewBox="2740 465 36 40"><rect x="2754.1" y="472.9" width="8" height="5" rx="2" fill="none" stroke="#000" stroke-width="1.8"/><rect x="2747.1" y="476.2" width="22" height="3.8" fill="#000"/><path d="M2750.1 479.5 L2750.1 496.5 Q2750.1 499.1 2752.7 499.1 L2763.5 499.1 Q2766.1 499.1 2766.1 496.5 L2766.1 479.5" fill="none" stroke="#000" stroke-width="1.9"/><line x1="2754.1" y1="480" x2="2754.1" y2="495" stroke="#000" stroke-width="2" stroke-linecap="round"/><line x1="2758.1" y1="480" x2="2758.1" y2="495" stroke="#000" stroke-width="2" stroke-linecap="round"/><line x1="2762.1" y1="480" x2="2762.1" y2="495" stroke="#000" stroke-width="2" stroke-linecap="round"/></svg>
<div style="position:absolute;left:2799.20px;top:759.94px;width:3px;height:3px;border-radius:50%;background:#333"></div>
<svg style="position:absolute;left:84.4px;top:826.58px" width="38.4" height="38.4" viewBox="0 0 24 24"><path fill="#000" stroke="#000" stroke-width="0.32" stroke-linejoin="miter" d="M3 17.25V21h3.75L17.81 9.94l-3.75-3.75L3 17.25zM5.92 19H5v-.92l9.06-9.06.92.92L5.92 19zM20.71 5.63l-2.34-2.34c-.39-.39-1.02-.39-1.41 0l-1.83 1.83 3.75 3.75 1.83-1.83c.39-.39.39-1.02 0-1.41z"/></svg>
<div style="position:absolute;left:143.50px;top:849.58px;width:3px;height:3px;border-radius:50%;background:#333"></div>
<div style="position:absolute;left:149.00px;top:849.58px;width:3px;height:3px;border-radius:50%;background:#333"></div>
<svg style="position:absolute;left:173.80px;top:818.43px" width="60" height="60" viewBox="-30 -30 60 60"><path d="M3.90 -20.20 L3.90 -23.30 Q3.90 -24.90 2.30 -24.90 L-2.30 -24.90 Q-3.90 -24.90 -3.90 -23.30 L-3.90 -20.20 A20.50 20.50 0 0 0 -11.53 -17.04 L-13.72 -19.23 Q-14.85 -20.36 -15.98 -19.23 L-19.23 -15.98 Q-20.36 -14.85 -19.23 -13.72 L-17.04 -11.53 A20.50 20.50 0 0 0 -20.20 -3.90 L-23.30 -3.90 Q-24.90 -3.90 -24.90 -2.30 L-24.90 2.30 Q-24.90 3.90 -23.30 3.90 L-20.20 3.90 A20.50 20.50 0 0 0 -17.04 11.53 L-19.23 13.72 Q-20.36 14.85 -19.23 15.98 L-15.98 19.23 Q-14.85 20.36 -13.72 19.23 L-11.53 17.04 A20.50 20.50 0 0 0 -3.90 20.20 L-3.90 23.30 Q-3.90 24.90 -2.30 24.90 L2.30 24.90 Q3.90 24.90 3.90 23.30 L3.90 20.20 A20.50 20.50 0 0 0 11.53 17.04 L13.72 19.23 Q14.85 20.36 15.98 19.23 L19.23 15.98 Q20.36 14.85 19.23 13.72 L17.04 11.53 A20.50 20.50 0 0 0 20.20 3.90 L23.30 3.90 Q24.90 3.90 24.90 2.30 L24.90 -2.30 Q24.90 -3.90 23.30 -3.90 L20.20 -3.90 A20.50 20.50 0 0 0 17.04 -11.53 L19.23 -13.72 Q20.36 -14.85 19.23 -15.98 L16.12 -19.09 Q14.85 -20.36 13.52 -19.15 L1.97 -8.58 A9.1 9.1 0 1 1 -5.55 -6.91" transform="scale(1,1.035)" fill="none" stroke="#17509f" stroke-width="3.8" stroke-linejoin="round" stroke-linecap="round"/></svg>
<div style="position:absolute;left:2297.4px;top:811.48px;width:63.6px;height:66.9px;border:2px solid #8a8a8a;border-radius:6px;box-sizing:border-box;background:#fff"></div>
<svg style="position:absolute;left:2290px;top:804.38px" width="80" height="80" viewBox="0 0 1568 1568"><path fill-rule="evenodd" d="M555 800 L555 730 L765 730 L810 650 L1015 650 L1015 840 L975 840 L975 765 L590 765 L590 800 Z M830 690 L975 690 L975 725 L815 725 Z" fill="#80dcc0"/><path d="M480 800 L940 800 L960 840 L650 840 L650 1040 L555 1040 Z" fill="#80dcc0"/><path d="M650 840 L1040 840 L1040 1120 L650 1120 Z" fill="#2ecc9c"/><path d="M690 1090 L795 930 L870 1030 L820 1090 Z M860 1090 L930 985 L1000 1090 Z" fill="#fff"/><circle cx="955" cy="910" r="32" fill="#fff"/></svg>
<div style="position:absolute;left:2455px;top:824.78px;width:200px;height:41.6px;border-radius:12px;background:#00b8b0"></div>
<svg style="position:absolute;left:2740px;top:824.38px" width="36" height="40" viewBox="2740 465 36 40"><rect x="2754.1" y="472.9" width="8" height="5" rx="2" fill="none" stroke="#000" stroke-width="1.8"/><rect x="2747.1" y="476.2" width="22" height="3.8" fill="#000"/><path d="M2750.1 479.5 L2750.1 496.5 Q2750.1 499.1 2752.7 499.1 L2763.5 499.1 Q2766.1 499.1 2766.1 496.5 L2766.1 479.5" fill="none" stroke="#000" stroke-width="1.9"/><line x1="2754.1" y1="480" x2="2754.1" y2="495" stroke="#000" stroke-width="2" stroke-linecap="round"/><line x1="2758.1" y1="480" x2="2758.1" y2="495" stroke="#000" stroke-width="2" stroke-linecap="round"/><line x1="2762.1" y1="480" x2="2762.1" y2="495" stroke="#000" stroke-width="2" stroke-linecap="round"/></svg>
<div style="position:absolute;left:2799.20px;top:849.78px;width:3px;height:3px;border-radius:50%;background:#333"></div>
<svg style="position:absolute;left:84.4px;top:916.42px" width="38.4" height="38.4" viewBox="0 0 24 24"><path fill="#000" stroke="#000" stroke-width="0.32" stroke-linejoin="miter" d="M3 17.25V21h3.75L17.81 9.94l-3.75-3.75L3 17.25zM5.92 19H5v-.92l9.06-9.06.92.92L5.92 19zM20.71 5.63l-2.34-2.34c-.39-.39-1.02-.39-1.41 0l-1.83 1.83 3.75 3.75 1.83-1.83c.39-.39.39-1.02 0-1.41z"/></svg>
<div style="position:absolute;left:143.50px;top:939.42px;width:3px;height:3px;border-radius:50%;background:#333"></div>
<div style="position:absolute;left:149.00px;top:939.42px;width:3px;height:3px;border-radius:50%;background:#333"></div>
<svg style="position:absolute;left:173.80px;top:908.27px" width="60" height="60" viewBox="-30 -30 60 60"><path d="M3.90 -20.20 L3.90 -23.30 Q3.90 -24.90 2.30 -24.90 L-2.30 -24.90 Q-3.90 -24.90 -3.90 -23.30 L-3.90 -20.20 A20.50 20.50 0 0 0 -11.53 -17.04 L-13.72 -19.23 Q-14.85 -20.36 -15.98 -19.23 L-19.23 -15.98 Q-20.36 -14.85 -19.23 -13.72 L-17.04 -11.53 A20.50 20.50 0 0 0 -20.20 -3.90 L-23.30 -3.90 Q-24.90 -3.90 -24.90 -2.30 L-24.90 2.30 Q-24.90 3.90 -23.30 3.90 L-20.20 3.90 A20.50 20.50 0 0 0 -17.04 11.53 L-19.23 13.72 Q-20.36 14.85 -19.23 15.98 L-15.98 19.23 Q-14.85 20.36 -13.72 19.23 L-11.53 17.04 A20.50 20.50 0 0 0 -3.90 20.20 L-3.90 23.30 Q-3.90 24.90 -2.30 24.90 L2.30 24.90 Q3.90 24.90 3.90 23.30 L3.90 20.20 A20.50 20.50 0 0 0 11.53 17.04 L13.72 19.23 Q14.85 20.36 15.98 19.23 L19.23 15.98 Q20.36 14.85 19.23 13.72 L17.04 11.53 A20.50 20.50 0 0 0 20.20 3.90 L23.30 3.90 Q24.90 3.90 24.90 2.30 L24.90 -2.30 Q24.90 -3.90 23.30 -3.90 L20.20 -3.90 A20.50 20.50 0 0 0 17.04 -11.53 L19.23 -13.72 Q20.36 -14.85 19.23 -15.98 L16.12 -19.09 Q14.85 -20.36 13.52 -19.15 L1.97 -8.58 A9.1 9.1 0 1 1 -5.55 -6.91" transform="scale(1,1.035)" fill="none" stroke="#17509f" stroke-width="3.8" stroke-linejoin="round" stroke-linecap="round"/></svg>
<div style="position:absolute;left:2297.4px;top:901.32px;width:63.6px;height:66.9px;border:2px solid #8a8a8a;border-radius:6px;box-sizing:border-box;background:#fff"></div>
<svg style="position:absolute;left:2290px;top:894.22px" width="80" height="80" viewBox="0 0 1568 1568"><path fill-rule="evenodd" d="M555 800 L555 730 L765 730 L810 650 L1015 650 L1015 840 L975 840 L975 765 L590 765 L590 800 Z M830 690 L975 690 L975 725 L815 725 Z" fill="#80dcc0"/><path d="M480 800 L940 800 L960 840 L650 840 L650 1040 L555 1040 Z" fill="#80dcc0"/><path d="M650 840 L1040 840 L1040 1120 L650 1120 Z" fill="#2ecc9c"/><path d="M690 1090 L795 930 L870 1030 L820 1090 Z M860 1090 L930 985 L1000 1090 Z" fill="#fff"/><circle cx="955" cy="910" r="32" fill="#fff"/></svg>
<div style="position:absolute;left:2455px;top:914.62px;width:200px;height:41.6px;border-radius:12px;background:#00b8b0"></div>
<svg style="position:absolute;left:2740px;top:914.22px" width="36" height="40" viewBox="2740 465 36 40"><rect x="2754.1" y="472.9" width="8" height="5" rx="2" fill="none" stroke="#000" stroke-width="1.8"/><rect x="2747.1" y="476.2" width="22" height="3.8" fill="#000"/><path d="M2750.1 479.5 L2750.1 496.5 Q2750.1 499.1 2752.7 499.1 L2763.5 499.1 Q2766.1 499.1 2766.1 496.5 L2766.1 479.5" fill="none" stroke="#000" stroke-width="1.9"/><line x1="2754.1" y1="480" x2="2754.1" y2="495" stroke="#000" stroke-width="2" stroke-linecap="round"/><line x1="2758.1" y1="480" x2="2758.1" y2="495" stroke="#000" stroke-width="2" stroke-linecap="round"/><line x1="2762.1" y1="480" x2="2762.1" y2="495" stroke="#000" stroke-width="2" stroke-linecap="round"/></svg>
<div style="position:absolute;left:2799.20px;top:939.62px;width:3px;height:3px;border-radius:50%;background:#333"></div>
<svg style="position:absolute;left:84.4px;top:1006.26px" width="38.4" height="38.4" viewBox="0 0 24 24"><path fill="#000" stroke="#000" stroke-width="0.32" stroke-linejoin="miter" d="M3 17.25V21h3.75L17.81 9.94l-3.75-3.75L3 17.25zM5.92 19H5v-.92l9.06-9.06.92.92L5.92 19zM20.71 5.63l-2.34-2.34c-.39-.39-1.02-.39-1.41 0l-1.83 1.83 3.75 3.75 1.83-1.83c.39-.39.39-1.02 0-1.41z"/></svg>
<div style="position:absolute;left:143.50px;top:1029.26px;width:3px;height:3px;border-radius:50%;background:#333"></div>
<div style="position:absolute;left:149.00px;top:1029.26px;width:3px;height:3px;border-radius:50%;background:#333"></div>
<svg style="position:absolute;left:173.80px;top:998.11px" width="60" height="60" viewBox="-30 -30 60 60"><path d="M3.90 -20.20 L3.90 -23.30 Q3.90 -24.90 2.30 -24.90 L-2.30 -24.90 Q-3.90 -24.90 -3.90 -23.30 L-3.90 -20.20 A20.50 20.50 0 0 0 -11.53 -17.04 L-13.72 -19.23 Q-14.85 -20.36 -15.98 -19.23 L-19.23 -15.98 Q-20.36 -14.85 -19.23 -13.72 L-17.04 -11.53 A20.50 20.50 0 0 0 -20.20 -3.90 L-23.30 -3.90 Q-24.90 -3.90 -24.90 -2.30 L-24.90 2.30 Q-24.90 3.90 -23.30 3.90 L-20.20 3.90 A20.50 20.50 0 0 0 -17.04 11.53 L-19.23 13.72 Q-20.36 14.85 -19.23 15.98 L-15.98 19.23 Q-14.85 20.36 -13.72 19.23 L-11.53 17.04 A20.50 20.50 0 0 0 -3.90 20.20 L-3.90 23.30 Q-3.90 24.90 -2.30 24.90 L2.30 24.90 Q3.90 24.90 3.90 23.30 L3.90 20.20 A20.50 20.50 0 0 0 11.53 17.04 L13.72 19.23 Q14.85 20.36 15.98 19.23 L19.23 15.98 Q20.36 14.85 19.23 13.72 L17.04 11.53 A20.50 20.50 0 0 0 20.20 3.90 L23.30 3.90 Q24.90 3.90 24.90 2.30 L24.90 -2.30 Q24.90 -3.90 23.30 -3.90 L20.20 -3.90 A20.50 20.50 0 0 0 17.04 -11.53 L19.23 -13.72 Q20.36 -14.85 19.23 -15.98 L16.12 -19.09 Q14.85 -20.36 13.52 -19.15 L1.97 -8.58 A9.1 9.1 0 1 1 -5.55 -6.91" transform="scale(1,1.035)" fill="none" stroke="#17509f" stroke-width="3.8" stroke-linejoin="round" stroke-linecap="round"/></svg>
<div style="position:absolute;left:2297.4px;top:991.16px;width:63.6px;height:66.9px;border:2px solid #8a8a8a;border-radius:6px;box-sizing:border-box;background:#fff"></div>
<svg style="position:absolute;left:2290px;top:984.06px" width="80" height="80" viewBox="0 0 1568 1568"><path fill-rule="evenodd" d="M555 800 L555 730 L765 730 L810 650 L1015 650 L1015 840 L975 840 L975 765 L590 765 L590 800 Z M830 690 L975 690 L975 725 L815 725 Z" fill="#80dcc0"/><path d="M480 800 L940 800 L960 840 L650 840 L650 1040 L555 1040 Z" fill="#80dcc0"/><path d="M650 840 L1040 840 L1040 1120 L650 1120 Z" fill="#2ecc9c"/><path d="M690 1090 L795 930 L870 1030 L820 1090 Z M860 1090 L930 985 L1000 1090 Z" fill="#fff"/><circle cx="955" cy="910" r="32" fill="#fff"/></svg>
<div style="position:absolute;left:2455px;top:1004.46px;width:200px;height:41.6px;border-radius:12px;background:#00b8b0"></div>
<svg style="position:absolute;left:2740px;top:1004.06px" width="36" height="40" viewBox="2740 465 36 40"><rect x="2754.1" y="472.9" width="8" height="5" rx="2" fill="none" stroke="#000" stroke-width="1.8"/><rect x="2747.1" y="476.2" width="22" height="3.8" fill="#000"/><path d="M2750.1 479.5 L2750.1 496.5 Q2750.1 499.1 2752.7 499.1 L2763.5 499.1 Q2766.1 499.1 2766.1 496.5 L2766.1 479.5" fill="none" stroke="#000" stroke-width="1.9"/><line x1="2754.1" y1="480" x2="2754.1" y2="495" stroke="#000" stroke-width="2" stroke-linecap="round"/><line x1="2758.1" y1="480" x2="2758.1" y2="495" stroke="#000" stroke-width="2" stroke-linecap="round"/><line x1="2762.1" y1="480" x2="2762.1" y2="495" stroke="#000" stroke-width="2" stroke-linecap="round"/></svg>
<div style="position:absolute;left:2799.20px;top:1029.46px;width:3px;height:3px;border-radius:50%;background:#333"></div>
<svg style="position:absolute;left:84.4px;top:1096.10px" width="38.4" height="38.4" viewBox="0 0 24 24"><path fill="#000" stroke="#000" stroke-width="0.32" stroke-linejoin="miter" d="M3 17.25V21h3.75L17.81 9.94l-3.75-3.75L3 17.25zM5.92 19H5v-.92l9.06-9.06.92.92L5.92 19zM20.71 5.63l-2.34-2.34c-.39-.39-1.02-.39-1.41 0l-1.83 1.83 3.75 3.75 1.83-1.83c.39-.39.39-1.02 0-1.41z"/></svg>
<div style="position:absolute;left:143.50px;top:1119.10px;width:3px;height:3px;border-radius:50%;background:#333"></div>
<div style="position:absolute;left:149.00px;top:1119.10px;width:3px;height:3px;border-radius:50%;background:#333"></div>
<svg style="position:absolute;left:173.80px;top:1087.95px" width="60" height="60" viewBox="-30 -30 60 60"><path d="M3.90 -20.20 L3.90 -23.30 Q3.90 -24.90 2.30 -24.90 L-2.30 -24.90 Q-3.90 -24.90 -3.90 -23.30 L-3.90 -20.20 A20.50 20.50 0 0 0 -11.53 -17.04 L-13.72 -19.23 Q-14.85 -20.36 -15.98 -19.23 L-19.23 -15.98 Q-20.36 -14.85 -19.23 -13.72 L-17.04 -11.53 A20.50 20.50 0 0 0 -20.20 -3.90 L-23.30 -3.90 Q-24.90 -3.90 -24.90 -2.30 L-24.90 2.30 Q-24.90 3.90 -23.30 3.90 L-20.20 3.90 A20.50 20.50 0 0 0 -17.04 11.53 L-19.23 13.72 Q-20.36 14.85 -19.23 15.98 L-15.98 19.23 Q-14.85 20.36 -13.72 19.23 L-11.53 17.04 A20.50 20.50 0 0 0 -3.90 20.20 L-3.90 23.30 Q-3.90 24.90 -2.30 24.90 L2.30 24.90 Q3.90 24.90 3.90 23.30 L3.90 20.20 A20.50 20.50 0 0 0 11.53 17.04 L13.72 19.23 Q14.85 20.36 15.98 19.23 L19.23 15.98 Q20.36 14.85 19.23 13.72 L17.04 11.53 A20.50 20.50 0 0 0 20.20 3.90 L23.30 3.90 Q24.90 3.90 24.90 2.30 L24.90 -2.30 Q24.90 -3.90 23.30 -3.90 L20.20 -3.90 A20.50 20.50 0 0 0 17.04 -11.53 L19.23 -13.72 Q20.36 -14.85 19.23 -15.98 L16.12 -19.09 Q14.85 -20.36 13.52 -19.15 L1.97 -8.58 A9.1 9.1 0 1 1 -5.55 -6.91" transform="scale(1,1.035)" fill="none" stroke="#17509f" stroke-width="3.8" stroke-linejoin="round" stroke-linecap="round"/></svg>
<div style="position:absolute;left:2297.4px;top:1081.00px;width:63.6px;height:66.9px;border:2px solid #8a8a8a;border-radius:6px;box-sizing:border-box;background:#fff"></div>
<svg style="position:absolute;left:2290px;top:1073.90px" width="80" height="80" viewBox="0 0 1568 1568"><path fill-rule="evenodd" d="M555 800 L555 730 L765 730 L810 650 L1015 650 L1015 840 L975 840 L975 765 L590 765 L590 800 Z M830 690 L975 690 L975 725 L815 725 Z" fill="#80dcc0"/><path d="M480 800 L940 800 L960 840 L650 840 L650 1040 L555 1040 Z" fill="#80dcc0"/><path d="M650 840 L1040 840 L1040 1120 L650 1120 Z" fill="#2ecc9c"/><path d="M690 1090 L795 930 L870 1030 L820 1090 Z M860 1090 L930 985 L1000 1090 Z" fill="#fff"/><circle cx="955" cy="910" r="32" fill="#fff"/></svg>
<div style="position:absolute;left:2455px;top:1094.30px;width:200px;height:41.6px;border-radius:12px;background:#00b8b0"></div>
<svg style="position:absolute;left:2740px;top:1093.90px" width="36" height="40" viewBox="2740 465 36 40"><rect x="2754.1" y="472.9" width="8" height="5" rx="2" fill="none" stroke="#000" stroke-width="1.8"/><rect x="2747.1" y="476.2" width="22" height="3.8" fill="#000"/><path d="M2750.1 479.5 L2750.1 496.5 Q2750.1 499.1 2752.7 499.1 L2763.5 499.1 Q2766.1 499.1 2766.1 496.5 L2766.1 479.5" fill="none" stroke="#000" stroke-width="1.9"/><line x1="2754.1" y1="480" x2="2754.1" y2="495" stroke="#000" stroke-width="2" stroke-linecap="round"/><line x1="2758.1" y1="480" x2="2758.1" y2="495" stroke="#000" stroke-width="2" stroke-linecap="round"/><line x1="2762.1" y1="480" x2="2762.1" y2="495" stroke="#000" stroke-width="2" stroke-linecap="round"/></svg>
<div style="position:absolute;left:2799.20px;top:1119.30px;width:3px;height:3px;border-radius:50%;background:#333"></div>
<svg style="position:absolute;left:84.4px;top:1185.94px" width="38.4" height="38.4" viewBox="0 0 24 24"><path fill="#000" stroke="#000" stroke-width="0.32" stroke-linejoin="miter" d="M3 17.25V21h3.75L17.81 9.94l-3.75-3.75L3 17.25zM5.92 19H5v-.92l9.06-9.06.92.92L5.92 19zM20.71 5.63l-2.34-2.34c-.39-.39-1.02-.39-1.41 0l-1.83 1.83 3.75 3.75 1.83-1.83c.39-.39.39-1.02 0-1.41z"/></svg>
<div style="position:absolute;left:143.50px;top:1208.94px;width:3px;height:3px;border-radius:50%;background:#333"></div>
<div style="position:absolute;left:149.00px;top:1208.94px;width:3px;height:3px;border-radius:50%;background:#333"></div>
<svg style="position:absolute;left:173.80px;top:1177.79px" width="60" height="60" viewBox="-30 -30 60 60"><path d="M3.90 -20.20 L3.90 -23.30 Q3.90 -24.90 2.30 -24.90 L-2.30 -24.90 Q-3.90 -24.90 -3.90 -23.30 L-3.90 -20.20 A20.50 20.50 0 0 0 -11.53 -17.04 L-13.72 -19.23 Q-14.85 -20.36 -15.98 -19.23 L-19.23 -15.98 Q-20.36 -14.85 -19.23 -13.72 L-17.04 -11.53 A20.50 20.50 0 0 0 -20.20 -3.90 L-23.30 -3.90 Q-24.90 -3.90 -24.90 -2.30 L-24.90 2.30 Q-24.90 3.90 -23.30 3.90 L-20.20 3.90 A20.50 20.50 0 0 0 -17.04 11.53 L-19.23 13.72 Q-20.36 14.85 -19.23 15.98 L-15.98 19.23 Q-14.85 20.36 -13.72 19.23 L-11.53 17.04 A20.50 20.50 0 0 0 -3.90 20.20 L-3.90 23.30 Q-3.90 24.90 -2.30 24.90 L2.30 24.90 Q3.90 24.90 3.90 23.30 L3.90 20.20 A20.50 20.50 0 0 0 11.53 17.04 L13.72 19.23 Q14.85 20.36 15.98 19.23 L19.23 15.98 Q20.36 14.85 19.23 13.72 L17.04 11.53 A20.50 20.50 0 0 0 20.20 3.90 L23.30 3.90 Q24.90 3.90 24.90 2.30 L24.90 -2.30 Q24.90 -3.90 23.30 -3.90 L20.20 -3.90 A20.50 20.50 0 0 0 17.04 -11.53 L19.23 -13.72 Q20.36 -14.85 19.23 -15.98 L16.12 -19.09 Q14.85 -20.36 13.52 -19.15 L1.97 -8.58 A9.1 9.1 0 1 1 -5.55 -6.91" transform="scale(1,1.035)" fill="none" stroke="#17509f" stroke-width="3.8" stroke-linejoin="round" stroke-linecap="round"/></svg>
<div style="position:absolute;left:2297.4px;top:1170.84px;width:63.6px;height:66.9px;border:2px solid #8a8a8a;border-radius:6px;box-sizing:border-box;background:#fff"></div>
<svg style="position:absolute;left:2290px;top:1163.74px" width="80" height="80" viewBox="0 0 1568 1568"><path fill-rule="evenodd" d="M555 800 L555 730 L765 730 L810 650 L1015 650 L1015 840 L975 840 L975 765 L590 765 L590 800 Z M830 690 L975 690 L975 725 L815 725 Z" fill="#80dcc0"/><path d="M480 800 L940 800 L960 840 L650 840 L650 1040 L555 1040 Z" fill="#80dcc0"/><path d="M650 840 L1040 840 L1040 1120 L650 1120 Z" fill="#2ecc9c"/><path d="M690 1090 L795 930 L870 1030 L820 1090 Z M860 1090 L930 985 L1000 1090 Z" fill="#fff"/><circle cx="955" cy="910" r="32" fill="#fff"/></svg>
<div style="position:absolute;left:2455px;top:1184.14px;width:200px;height:41.6px;border-radius:12px;background:#00b8b0"></div>
<svg style="position:absolute;left:2740px;top:1183.74px" width="36" height="40" viewBox="2740 465 36 40"><rect x="2754.1" y="472.9" width="8" height="5" rx="2" fill="none" stroke="#000" stroke-width="1.8"/><rect x="2747.1" y="476.2" width="22" height="3.8" fill="#000"/><path d="M2750.1 479.5 L2750.1 496.5 Q2750.1 499.1 2752.7 499.1 L2763.5 499.1 Q2766.1 499.1 2766.1 496.5 L2766.1 479.5" fill="none" stroke="#000" stroke-width="1.9"/><line x1="2754.1" y1="480" x2="2754.1" y2="495" stroke="#000" stroke-width="2" stroke-linecap="round"/><line x1="2758.1" y1="480" x2="2758.1" y2="495" stroke="#000" stroke-width="2" stroke-linecap="round"/><line x1="2762.1" y1="480" x2="2762.1" y2="495" stroke="#000" stroke-width="2" stroke-linecap="round"/></svg>
<div style="position:absolute;left:2799.20px;top:1209.14px;width:3px;height:3px;border-radius:50%;background:#333"></div>
<svg style="position:absolute;left:84.4px;top:1275.78px" width="38.4" height="38.4" viewBox="0 0 24 24"><path fill="#000" stroke="#000" stroke-width="0.32" stroke-linejoin="miter" d="M3 17.25V21h3.75L17.81 9.94l-3.75-3.75L3 17.25zM5.92 19H5v-.92l9.06-9.06.92.92L5.92 19zM20.71 5.63l-2.34-2.34c-.39-.39-1.02-.39-1.41 0l-1.83 1.83 3.75 3.75 1.83-1.83c.39-.39.39-1.02 0-1.41z"/></svg>
<div style="position:absolute;left:143.50px;top:1298.78px;width:3px;height:3px;border-radius:50%;background:#333"></div>
<div style="position:absolute;left:149.00px;top:1298.78px;width:3px;height:3px;border-radius:50%;background:#333"></div>
<svg style="position:absolute;left:173.80px;top:1267.63px" width="60" height="60" viewBox="-30 -30 60 60"><path d="M3.90 -20.20 L3.90 -23.30 Q3.90 -24.90 2.30 -24.90 L-2.30 -24.90 Q-3.90 -24.90 -3.90 -23.30 L-3.90 -20.20 A20.50 20.50 0 0 0 -11.53 -17.04 L-13.72 -19.23 Q-14.85 -20.36 -15.98 -19.23 L-19.23 -15.98 Q-20.36 -14.85 -19.23 -13.72 L-17.04 -11.53 A20.50 20.50 0 0 0 -20.20 -3.90 L-23.30 -3.90 Q-24.90 -3.90 -24.90 -2.30 L-24.90 2.30 Q-24.90 3.90 -23.30 3.90 L-20.20 3.90 A20.50 20.50 0 0 0 -17.04 11.53 L-19.23 13.72 Q-20.36 14.85 -19.23 15.98 L-15.98 19.23 Q-14.85 20.36 -13.72 19.23 L-11.53 17.04 A20.50 20.50 0 0 0 -3.90 20.20 L-3.90 23.30 Q-3.90 24.90 -2.30 24.90 L2.30 24.90 Q3.90 24.90 3.90 23.30 L3.90 20.20 A20.50 20.50 0 0 0 11.53 17.04 L13.72 19.23 Q14.85 20.36 15.98 19.23 L19.23 15.98 Q20.36 14.85 19.23 13.72 L17.04 11.53 A20.50 20.50 0 0 0 20.20 3.90 L23.30 3.90 Q24.90 3.90 24.90 2.30 L24.90 -2.30 Q24.90 -3.90 23.30 -3.90 L20.20 -3.90 A20.50 20.50 0 0 0 17.04 -11.53 L19.23 -13.72 Q20.36 -14.85 19.23 -15.98 L16.12 -19.09 Q14.85 -20.36 13.52 -19.15 L1.97 -8.58 A9.1 9.1 0 1 1 -5.55 -6.91" transform="scale(1,1.035)" fill="none" stroke="#17509f" stroke-width="3.8" stroke-linejoin="round" stroke-linecap="round"/></svg>
<div style="position:absolute;left:2297.4px;top:1260.68px;width:63.6px;height:66.9px;border:2px solid #8a8a8a;border-radius:6px;box-sizing:border-box;background:#fff"></div>
<svg style="position:absolute;left:2290px;top:1253.58px" width="80" height="80" viewBox="0 0 1568 1568"><path fill-rule="evenodd" d="M555 800 L555 730 L765 730 L810 650 L1015 650 L1015 840 L975 840 L975 765 L590 765 L590 800 Z M830 690 L975 690 L975 725 L815 725 Z" fill="#80dcc0"/><path d="M480 800 L940 800 L960 840 L650 840 L650 1040 L555 1040 Z" fill="#80dcc0"/><path d="M650 840 L1040 840 L1040 1120 L650 1120 Z" fill="#2ecc9c"/><path d="M690 1090 L795 930 L870 1030 L820 1090 Z M860 1090 L930 985 L1000 1090 Z" fill="#fff"/><circle cx="955" cy="910" r="32" fill="#fff"/></svg>
<div style="position:absolute;left:2455px;top:1273.98px;width:200px;height:41.6px;border-radius:12px;background:#00b8b0"></div>
<svg style="position:absolute;left:2740px;top:1273.58px" width="36" height="40" viewBox="2740 465 36 40"><rect x="2754.1" y="472.9" width="8" height="5" rx="2" fill="none" stroke="#000" stroke-width="1.8"/><rect x="2747.1" y="476.2" width="22" height="3.8" fill="#000"/><path d="M2750.1 479.5 L2750.1 496.5 Q2750.1 499.1 2752.7 499.1 L2763.5 499.1 Q2766.1 499.1 2766.1 496.5 L2766.1 479.5" fill="none" stroke="#000" stroke-width="1.9"/><line x1="2754.1" y1="480" x2="2754.1" y2="495" stroke="#000" stroke-width="2" stroke-linecap="round"/><line x1="2758.1" y1="480" x2="2758.1" y2="495" stroke="#000" stroke-width="2" stroke-linecap="round"/><line x1="2762.1" y1="480" x2="2762.1" y2="495" stroke="#000" stroke-width="2" stroke-linecap="round"/></svg>
<div style="position:absolute;left:2799.20px;top:1298.98px;width:3px;height:3px;border-radius:50%;background:#333"></div>
<div style="position:absolute;left:53.8px;top:1342.9px;width:2751.2px;height:82.6px;border:2px solid #cbcbcb;border-top-color:#cbcbcb;border-radius:0 0 7px 7px;box-sizing:border-box;background:#f8f9fa"></div>
<div style="position:absolute;left:64.8px;top:1355.6px;width:579.20px;height:57.4px;border:2px solid #d2d2d2;border-radius:9px;box-sizing:border-box;background:#fff;overflow:hidden"><div style="position:absolute;left:0;top:0;width:114px;bottom:0;background:#fbfcfc"></div></div>
<div style="position:absolute;left:122.00px;top:1355.60px;width:2.00px;height:57.40px;background:#d2d2d2"></div>
<div style="position:absolute;left:179.50px;top:1355.60px;width:2.00px;height:57.40px;background:#d2d2d2"></div>
<div style="position:absolute;left:238.20px;top:1355.60px;width:2.00px;height:57.40px;background:#d2d2d2"></div>
<div style="position:absolute;left:296.00px;top:1355.60px;width:2.00px;height:57.40px;background:#d2d2d2"></div>
<div style="position:absolute;left:353.00px;top:1355.60px;width:2.00px;height:57.40px;background:#d2d2d2"></div>
<div style="position:absolute;left:410.50px;top:1355.60px;width:2.00px;height:57.40px;background:#d2d2d2"></div>
<div style="position:absolute;left:469.00px;top:1355.60px;width:2.00px;height:57.40px;background:#d2d2d2"></div>
<div style="position:absolute;left:527.00px;top:1355.60px;width:2.00px;height:57.40px;background:#d2d2d2"></div>
<div style="position:absolute;left:585.00px;top:1355.60px;width:2.00px;height:57.40px;background:#d2d2d2"></div>
<div style="position:absolute;left:180.4px;top:1355.6px;width:59px;height:57.4px;border:2px solid #3d7fcc;box-sizing:border-box;background:#331577"></div>
<svg style="position:absolute;left:60px;top:1350px" width="600" height="70" viewBox="60 1350 600 70"><rect x="86" y="1376.7" width="2.2" height="16" fill="#7aabd9"/><path d="M88.8 1384.7 L100 1377 L100 1392.5 Z" fill="#7aabd9"/><path d="M146 1384.7 L157.8 1377 L157.8 1392.5 Z" fill="#7aabd9"/><path d="M562.3 1384.7 L550.3 1377 L550.3 1392.5 Z" fill="#3f86c8"/><path d="M617.7 1384.7 L606.5 1377 L606.5 1392.5 Z" fill="#3f86c8"/><rect x="618.5" y="1376.7" width="2.4" height="16" fill="#3f86c8"/></svg>
<div style="position:absolute;left:671.6px;top:1353.3px;width:128.6px;height:61.6px;border:2px solid #d2d2d2;border-radius:9px;box-sizing:border-box;background:#fff"></div>
<svg style="position:absolute;left:760px;top:1379px" width="18" height="13"><path d="M0.8 0.6 L17 0.6 L8.9 12.6 Z" fill="#333"/></svg>
<svg style="position:absolute;left:2745px;top:1365px" width="40" height="40" viewBox="2745 1365 40 40"><path d="M2765.2 1374.7 A12.1 12.1 0 1 0 2775.8 1381" fill="none" stroke="#3f8acb" stroke-width="3.8"/><path d="M2765.2 1368.6 L2775.1 1374.7 L2765.2 1380.7 Z" fill="#3f8acb"/></svg>
<div style="position:absolute;left:19.00px;top:1462.80px;width:2821.00px;height:2.00px;background:#dadfeb"></div>
<svg style="position:absolute;left:2812px;top:1869px" width="28" height="28" viewBox="0 0 28 28"><path d="M28 0 L28 28 L0 28 L4 28 A24 24 0 0 0 28 4 Z" fill="#0a0a0a"/></svg>
<div class="t" style="left:178.58px;top:58px;font-size:31px;font-weight:700;color:#ffffff;transform:scaleX(0.90029);transform-origin:0 0;">SERVICE MANAGEMENT SYSTEM</div>
<div class="t" style="left:2121.41px;top:58px;font-size:26.8px;font-weight:400;color:#7d8ab4;transform:scaleX(0.95563);transform-origin:0 0;">English</div>
<div class="t" style="left:2354.16px;top:37px;font-size:18px;font-weight:700;color:#ffffff;transform:scaleX(1.01619);transform-origin:0 0;">0</div>
<div class="t" style="left:2498.66px;top:60px;font-size:26.8px;font-weight:400;color:#7d8ab4;letter-spacing:-0.232px;">Company Administrator</div>
<div class="t" style="left:85.95px;top:204px;font-size:36px;font-weight:400;color:#4f679f;letter-spacing:0.541px;-webkit-text-stroke:0.75px #4f679f;">Item Master</div>
<div class="t" style="left:2542.13px;top:210px;font-size:26.8px;font-weight:400;color:#000000;transform:scaleX(0.96376);transform-origin:0 0;">Inventory</div>
<div class="t" style="left:2691.50px;top:211px;font-size:26.8px;font-weight:400;color:#6e86c0;letter-spacing:-0.124px;">Item Master</div>
<div class="t" style="left:136.09px;top:321px;font-size:26.8px;font-weight:400;color:#333333;transform:scaleX(0.96293);transform-origin:0 0;">Add</div>
<div class="t" style="left:2488.41px;top:322px;font-size:26.8px;font-weight:400;color:#727272;transform:scaleX(0.93856);transform-origin:0 0;">Search...</div>
<div class="t" style="left:168.52px;top:399px;font-size:26.8px;font-weight:400;color:#333333;letter-spacing:-0.337px;">Item Name</div>
<div class="t" style="left:779.76px;top:399px;font-size:26.8px;font-weight:400;color:#333333;transform:scaleX(0.96025);transform-origin:0 0;">PartCode</div>
<div class="t" style="left:1072.35px;top:399px;font-size:26.8px;font-weight:400;color:#333333;transform:scaleX(0.96761);transform-origin:0 0;">Item Type</div>
<div class="t" style="left:1317.35px;top:399px;font-size:26.8px;font-weight:400;color:#333333;transform:scaleX(0.96573);transform-origin:0 0;">Item Category</div>
<div class="t" style="left:1561.52px;top:399px;font-size:26.8px;font-weight:400;color:#333333;letter-spacing:-0.281px;">Item Price</div>
<div class="t" style="left:1781.49px;top:399px;font-size:26.8px;font-weight:400;color:#333333;transform:scaleX(0.94516);transform-origin:0 0;">Reorder Quantity</div>
<div class="t" style="left:2074.52px;top:399px;font-size:26.8px;font-weight:400;color:#333333;transform:scaleX(0.93550);transform-origin:0 0;">Reorder Unit</div>
<div class="t" style="left:2515.86px;top:399px;font-size:26.8px;font-weight:400;color:#333333;letter-spacing:-0.287px;">Status</div>
<div class="t" style="left:262.80px;top:472px;font-size:26.8px;font-weight:400;color:#333333;letter-spacing:-0.338px;">10W40/AP12</div>
<div class="t" style="left:780.14px;top:472px;font-size:26.8px;font-weight:400;color:#333333;letter-spacing:-0.320px;">10W40/AP12</div>
<div class="t" style="left:1073.40px;top:472px;font-size:26.8px;font-weight:400;color:#333333;transform:scaleX(0.92822);transform-origin:0 0;">Engine Oil</div>
<div class="t" style="left:1318.00px;top:472px;font-size:26.8px;font-weight:400;color:#333333;letter-spacing:-0.314px;">Lubricant</div>
<div class="t" style="left:1685.47px;top:472px;font-size:26.8px;font-weight:400;color:#333333;transform:scaleX(0.96248);transform-origin:0 0;">3.600</div>
<div class="t" style="left:2029.89px;top:472px;font-size:26.8px;font-weight:400;color:#333333;transform:scaleX(0.90483);transform-origin:0 0;">0</div>
<div class="t" style="left:2076.48px;top:472px;font-size:26.8px;font-weight:400;color:#333333;transform:scaleX(1.05597);transform-origin:0 0;">ltr</div>
<div class="t" style="left:2527.00px;top:476px;font-size:20px;font-weight:700;color:#111111;transform:scaleX(0.95562);transform-origin:0 0;">Active</div>
<div class="t" style="left:262.80px;top:562px;font-size:26.8px;font-weight:400;color:#333333;letter-spacing:-0.447px;">10W40/WV12</div>
<div class="t" style="left:780.14px;top:562px;font-size:26.8px;font-weight:400;color:#333333;letter-spacing:-0.448px;">10W40/WV12</div>
<div class="t" style="left:1073.40px;top:562px;font-size:26.8px;font-weight:400;color:#333333;transform:scaleX(0.92822);transform-origin:0 0;">Engine Oil</div>
<div class="t" style="left:1318.00px;top:562px;font-size:26.8px;font-weight:400;color:#333333;letter-spacing:-0.314px;">Lubricant</div>
<div class="t" style="left:1685.47px;top:562px;font-size:26.8px;font-weight:400;color:#333333;transform:scaleX(0.96248);transform-origin:0 0;">3.600</div>
<div class="t" style="left:2029.89px;top:562px;font-size:26.8px;font-weight:400;color:#333333;transform:scaleX(0.90483);transform-origin:0 0;">0</div>
<div class="t" style="left:2076.48px;top:562px;font-size:26.8px;font-weight:400;color:#333333;transform:scaleX(1.05597);transform-origin:0 0;">ltr</div>
<div class="t" style="left:2527.00px;top:566px;font-size:20px;font-weight:700;color:#111111;transform:scaleX(0.95562);transform-origin:0 0;">Active</div>
<div class="t" style="left:262.74px;top:652px;font-size:26.8px;font-weight:400;color:#333333;transform:scaleX(0.92694);transform-origin:0 0;">10W50/SILVER OIL</div>
<div class="t" style="left:780.26px;top:652px;font-size:26.8px;font-weight:400;color:#333333;transform:scaleX(0.92694);transform-origin:0 0;">10W50/SILVER OIL</div>
<div class="t" style="left:1073.40px;top:652px;font-size:26.8px;font-weight:400;color:#333333;transform:scaleX(0.92822);transform-origin:0 0;">Engine Oil</div>
<div class="t" style="left:1318.00px;top:652px;font-size:26.8px;font-weight:400;color:#333333;letter-spacing:-0.314px;">Lubricant</div>
<div class="t" style="left:1685.93px;top:652px;font-size:26.8px;font-weight:400;color:#333333;transform:scaleX(0.96561);transform-origin:0 0;">4.400</div>
<div class="t" style="left:2029.89px;top:652px;font-size:26.8px;font-weight:400;color:#333333;transform:scaleX(0.90483);transform-origin:0 0;">0</div>
<div class="t" style="left:2076.48px;top:652px;font-size:26.8px;font-weight:400;color:#333333;transform:scaleX(1.05597);transform-origin:0 0;">ltr</div>
<div class="t" style="left:2527.00px;top:656px;font-size:20px;font-weight:700;color:#111111;transform:scaleX(0.95562);transform-origin:0 0;">Active</div>
<div class="t" style="left:262.62px;top:742px;font-size:26.8px;font-weight:400;color:#333333;letter-spacing:-0.318px;">20W50/AP12</div>
<div class="t" style="left:779.91px;top:742px;font-size:26.8px;font-weight:400;color:#333333;letter-spacing:-0.294px;">20W50/AP12</div>
<div class="t" style="left:1073.40px;top:742px;font-size:26.8px;font-weight:400;color:#333333;transform:scaleX(0.92822);transform-origin:0 0;">Engine Oil</div>
<div class="t" style="left:1318.00px;top:742px;font-size:26.8px;font-weight:400;color:#333333;letter-spacing:-0.314px;">Lubricant</div>
<div class="t" style="left:1685.47px;top:742px;font-size:26.8px;font-weight:400;color:#333333;transform:scaleX(0.96248);transform-origin:0 0;">3.600</div>
<div class="t" style="left:2029.89px;top:742px;font-size:26.8px;font-weight:400;color:#333333;transform:scaleX(0.90483);transform-origin:0 0;">0</div>
<div class="t" style="left:2076.48px;top:742px;font-size:26.8px;font-weight:400;color:#333333;transform:scaleX(1.05597);transform-origin:0 0;">ltr</div>
<div class="t" style="left:2527.00px;top:746px;font-size:20px;font-weight:700;color:#111111;transform:scaleX(0.95562);transform-origin:0 0;">Active</div>
<div class="t" style="left:263.13px;top:832px;font-size:26.8px;font-weight:400;color:#333333;transform:scaleX(0.94964);transform-origin:0 0;">90790-BS214</div>
<div class="t" style="left:780.65px;top:831px;font-size:26.8px;font-weight:400;color:#333333;transform:scaleX(0.94964);transform-origin:0 0;">90790-BS214</div>
<div class="t" style="left:1073.40px;top:831px;font-size:26.8px;font-weight:400;color:#333333;transform:scaleX(0.92822);transform-origin:0 0;">Engine Oil</div>
<div class="t" style="left:1318.00px;top:831px;font-size:26.8px;font-weight:400;color:#333333;letter-spacing:-0.314px;">Lubricant</div>
<div class="t" style="left:1685.68px;top:831px;font-size:26.8px;font-weight:400;color:#333333;transform:scaleX(0.96593);transform-origin:0 0;">1.450</div>
<div class="t" style="left:2029.89px;top:831px;font-size:26.8px;font-weight:400;color:#333333;transform:scaleX(0.90483);transform-origin:0 0;">0</div>
<div class="t" style="left:2076.48px;top:831px;font-size:26.8px;font-weight:400;color:#333333;transform:scaleX(1.05597);transform-origin:0 0;">ltr</div>
<div class="t" style="left:2527.00px;top:835px;font-size:20px;font-weight:700;color:#111111;transform:scaleX(0.95562);transform-origin:0 0;">Active</div>
<div class="t" style="left:263.27px;top:922px;font-size:26.8px;font-weight:400;color:#333333;transform:scaleX(0.92306);transform-origin:0 0;">90790-BU401</div>
<div class="t" style="left:779.79px;top:921px;font-size:26.8px;font-weight:400;color:#333333;transform:scaleX(0.92306);transform-origin:0 0;">90790-BU401</div>
<div class="t" style="left:1073.40px;top:921px;font-size:26.8px;font-weight:400;color:#333333;transform:scaleX(0.92822);transform-origin:0 0;">Engine Oil</div>
<div class="t" style="left:1318.00px;top:921px;font-size:26.8px;font-weight:400;color:#333333;letter-spacing:-0.314px;">Lubricant</div>
<div class="t" style="left:1685.68px;top:921px;font-size:26.8px;font-weight:400;color:#333333;transform:scaleX(0.96593);transform-origin:0 0;">1.950</div>
<div class="t" style="left:2029.89px;top:921px;font-size:26.8px;font-weight:400;color:#333333;transform:scaleX(0.90483);transform-origin:0 0;">0</div>
<div class="t" style="left:2076.48px;top:921px;font-size:26.8px;font-weight:400;color:#333333;transform:scaleX(1.05597);transform-origin:0 0;">ltr</div>
<div class="t" style="left:2527.00px;top:925px;font-size:20px;font-weight:700;color:#111111;transform:scaleX(0.95562);transform-origin:0 0;">Active</div>
<div class="t" style="left:262.64px;top:1012px;font-size:26.8px;font-weight:400;color:#333333;transform:scaleX(0.94842);transform-origin:0 0;">1UY-13440-02</div>
<div class="t" style="left:780.16px;top:1011px;font-size:26.8px;font-weight:400;color:#333333;transform:scaleX(0.94842);transform-origin:0 0;">1UY-13440-02</div>
<div class="t" style="left:1074.31px;top:1011px;font-size:26.8px;font-weight:400;color:#333333;transform:scaleX(0.95120);transform-origin:0 0;">Oil Filter</div>
<div class="t" style="left:1318.00px;top:1011px;font-size:26.8px;font-weight:400;color:#333333;letter-spacing:-0.314px;">Lubricant</div>
<div class="t" style="left:1685.93px;top:1011px;font-size:26.8px;font-weight:400;color:#333333;transform:scaleX(0.96561);transform-origin:0 0;">4.000</div>
<div class="t" style="left:2029.89px;top:1011px;font-size:26.8px;font-weight:400;color:#333333;transform:scaleX(0.90483);transform-origin:0 0;">0</div>
<div class="t" style="left:2076.34px;top:1011px;font-size:26.8px;font-weight:400;color:#333333;letter-spacing:-0.779px;">No</div>
<div class="t" style="left:2527.00px;top:1015px;font-size:20px;font-weight:700;color:#111111;transform:scaleX(0.95562);transform-origin:0 0;">Active</div>
<div class="t" style="left:262.75px;top:1102px;font-size:26.8px;font-weight:400;color:#333333;transform:scaleX(0.95146);transform-origin:0 0;">4X7-13440-90</div>
<div class="t" style="left:780.27px;top:1101px;font-size:26.8px;font-weight:400;color:#333333;transform:scaleX(0.95146);transform-origin:0 0;">4X7-13440-90</div>
<div class="t" style="left:1074.31px;top:1101px;font-size:26.8px;font-weight:400;color:#333333;transform:scaleX(0.95120);transform-origin:0 0;">Oil Filter</div>
<div class="t" style="left:1318.00px;top:1101px;font-size:26.8px;font-weight:400;color:#333333;letter-spacing:-0.314px;">Lubricant</div>
<div class="t" style="left:1685.93px;top:1101px;font-size:26.8px;font-weight:400;color:#333333;transform:scaleX(0.96561);transform-origin:0 0;">4.750</div>
<div class="t" style="left:2029.89px;top:1101px;font-size:26.8px;font-weight:400;color:#333333;transform:scaleX(0.90483);transform-origin:0 0;">0</div>
<div class="t" style="left:2076.34px;top:1101px;font-size:26.8px;font-weight:400;color:#333333;letter-spacing:-0.779px;">No</div>
<div class="t" style="left:2527.00px;top:1105px;font-size:20px;font-weight:700;color:#111111;transform:scaleX(0.95562);transform-origin:0 0;">Active</div>
<div class="t" style="left:263.63px;top:1191px;font-size:26.8px;font-weight:400;color:#333333;transform:scaleX(0.94384);transform-origin:0 0;">5D3-13440-09</div>
<div class="t" style="left:781.15px;top:1191px;font-size:26.8px;font-weight:400;color:#333333;transform:scaleX(0.94384);transform-origin:0 0;">5D3-13440-09</div>
<div class="t" style="left:1074.31px;top:1191px;font-size:26.8px;font-weight:400;color:#333333;transform:scaleX(0.95120);transform-origin:0 0;">Oil Filter</div>
<div class="t" style="left:1318.00px;top:1191px;font-size:26.8px;font-weight:400;color:#333333;letter-spacing:-0.314px;">Lubricant</div>
<div class="t" style="left:1685.78px;top:1191px;font-size:26.8px;font-weight:400;color:#333333;transform:scaleX(0.95525);transform-origin:0 0;">5.000</div>
<div class="t" style="left:2029.89px;top:1191px;font-size:26.8px;font-weight:400;color:#333333;transform:scaleX(0.90483);transform-origin:0 0;">0</div>
<div class="t" style="left:2076.34px;top:1191px;font-size:26.8px;font-weight:400;color:#333333;letter-spacing:-0.779px;">No</div>
<div class="t" style="left:2527.00px;top:1195px;font-size:20px;font-weight:700;color:#111111;transform:scaleX(0.95562);transform-origin:0 0;">Active</div>
<div class="t" style="left:263.62px;top:1281px;font-size:26.8px;font-weight:400;color:#333333;transform:scaleX(0.94913);transform-origin:0 0;">5DM-13440-00</div>
<div class="t" style="left:781.14px;top:1281px;font-size:26.8px;font-weight:400;color:#333333;transform:scaleX(0.94913);transform-origin:0 0;">5DM-13440-00</div>
<div class="t" style="left:1074.31px;top:1281px;font-size:26.8px;font-weight:400;color:#333333;transform:scaleX(0.95120);transform-origin:0 0;">Oil Filter</div>
<div class="t" style="left:1318.00px;top:1281px;font-size:26.8px;font-weight:400;color:#333333;letter-spacing:-0.314px;">Lubricant</div>
<div class="t" style="left:1685.57px;top:1281px;font-size:26.8px;font-weight:400;color:#333333;transform:scaleX(0.95937);transform-origin:0 0;">6.000</div>
<div class="t" style="left:2029.89px;top:1281px;font-size:26.8px;font-weight:400;color:#333333;transform:scaleX(0.90483);transform-origin:0 0;">0</div>
<div class="t" style="left:2076.34px;top:1281px;font-size:26.8px;font-weight:400;color:#333333;letter-spacing:-0.779px;">No</div>
<div class="t" style="left:2527.00px;top:1285px;font-size:20px;font-weight:700;color:#111111;transform:scaleX(0.95562);transform-origin:0 0;">Active</div>
<div class="t" style="left:202.84px;top:1371px;font-size:26.8px;font-weight:400;color:#ffffff;transform:scaleX(0.60976);transform-origin:0 0;">1</div>
<div class="t" style="left:259.96px;top:1371px;font-size:26.8px;font-weight:400;color:#3f86c8;transform:scaleX(1.00069);transform-origin:0 0;">2</div>
<div class="t" style="left:317.62px;top:1371px;font-size:26.8px;font-weight:400;color:#3f86c8;transform:scaleX(0.91987);transform-origin:0 0;">3</div>
<div class="t" style="left:374.82px;top:1371px;font-size:26.8px;font-weight:400;color:#3f86c8;transform:scaleX(0.99161);transform-origin:0 0;">4</div>
<div class="t" style="left:433.95px;top:1371px;font-size:26.8px;font-weight:400;color:#3f86c8;transform:scaleX(0.92120);transform-origin:0 0;">5</div>
<div class="t" style="left:487.19px;top:1371px;font-size:26.8px;font-weight:400;color:#3f86c8;transform:scaleX(0.94191);transform-origin:0 0;">...</div>
<div class="t" style="left:692.92px;top:1371px;font-size:26.8px;font-weight:400;color:#333333;transform:scaleX(0.95409);transform-origin:0 0;">10</div>
<div class="t" style="left:814.39px;top:1371px;font-size:26.8px;font-weight:400;color:#a0a0a0;letter-spacing:-0.397px;">items per page</div>
<div class="t" style="left:2493.65px;top:1371px;font-size:26.8px;font-weight:400;color:#a0a0a0;transform:scaleX(0.97023);transform-origin:0 0;">1 - 10 of 997 items</div>
<div class="t" style="left:59.23px;top:1511px;font-size:26.8px;font-weight:400;color:#6f7fb6;letter-spacing:-0.393px;">© 2021 XigologiX</div>
<div class="t" style="left:2717.19px;top:1511px;font-size:26.8px;font-weight:400;color:#a3abc9;transform:scaleX(0.88121);transform-origin:0 0;">By SDS</div>
</body></html>
